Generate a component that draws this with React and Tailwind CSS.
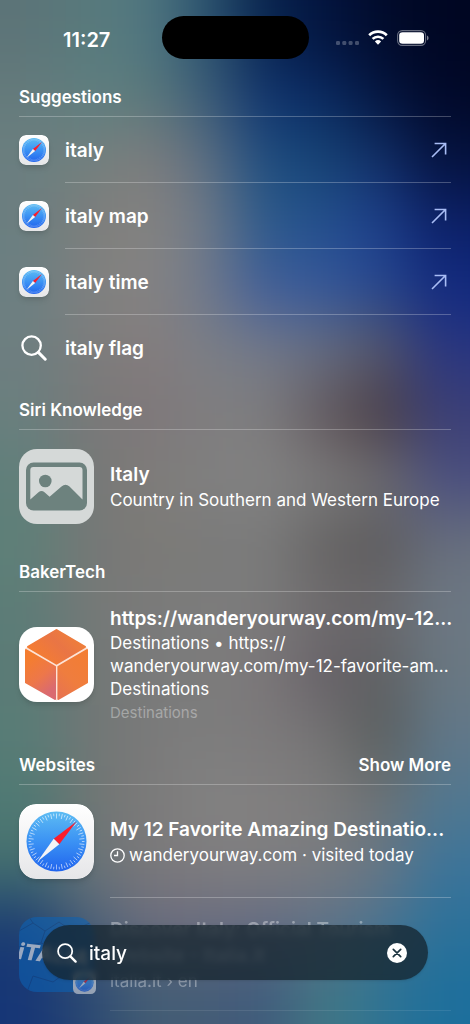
import React, { useState } from 'react';

const font = 'font-[Inter,"Liberation_Sans",sans-serif]';

// Wallpaper colours, top to bottom, left to right
const wallpaper = [
  ['#5c7478', '#587a7c', '#527880', '#2c5470', '#08244f', '#03143f', '#010b2b', '#000622'],
  ['#657b7c', '#5f7f80', '#5b7a7c', '#3c5d78', '#10336e', '#0a2a62', '#04153f', '#010828'],
  ['#6b7f80', '#72807f', '#807d7d', '#5e7082', '#1e4d80', '#164474', '#122f68', '#04123e'],
  ['#6b7e80', '#7d7d7b', '#858380', '#707a88', '#2c5a8a', '#24508f', '#1d3f8a', '#0c2068'],
  ['#6c8082', '#7f8080', '#868482', '#70798c', '#405d9a', '#35579a', '#26478f', '#122a80'],
  ['#6e7e80', '#7b7c7c', '#857c7c', '#7c7f85', '#757a88', '#686e80', '#575668', '#2a3680'],
  ['#6a7f7e', '#797878', '#7e777a', '#7f7d7e', '#7e7d7e', '#62585d', '#483c42', '#3c3f76'],
  ['#5f7f7a', '#767877', '#7f7c79', '#808080', '#828282', '#7c7c7d', '#706f72', '#4a4f80'],
  ['#5e8078', '#757776', '#7c7a76', '#7a7a79', '#7b7b7b', '#646262', '#5b595a', '#69707e'],
  ['#5c7c77', '#767877', '#7a7a7a', '#7c7c7c', '#7b7b7b', '#706d6f', '#6a686b', '#6c7884'],
  ['#5a7b76', '#727775', '#7a7a7a', '#7c7c7c', '#7c7779', '#655f66', '#5f6062', '#6a7882'],
  ['#587c76', '#717675', '#7a7a7a', '#7d7d7d', '#7c7a7b', '#757475', '#585c5b', '#61788a'],
  ['#4f7a74', '#6f7574', '#7c7a7a', '#828282', '#828080', '#7d7c7c', '#6c7174', '#517890'],
  ['#44706f', '#6a7377', '#7b797a', '#7f7d7e', '#7f7f80', '#7a7c7f', '#687684', '#3c749a'],
  ['#1a3b72', '#4a6178', '#6a6b7d', '#6a6c80', '#656b82', '#5e7088', '#4b7390', '#2b719a'],
  ['#163676', '#2a4872', '#435d74', '#445c76', '#3f5a7c', '#427884', '#2e7393', '#1d6f9c'],
];

const Wallpaper = () => (
  <svg
    className="absolute inset-0 w-full h-full"
    viewBox="0 0 8 16"
    preserveAspectRatio="none"
    aria-hidden="true"
  >
    <filter id="soften" x="-20%" y="-20%" width="140%" height="140%" colorInterpolationFilters="sRGB">
      <feGaussianBlur stdDeviation="0.5 0.5" />
    </filter>
    <g filter="url(#soften)">
      {wallpaper.map((row, y) =>
        row.map((color, x) => {
          const left = x === 0 ? -3 : x;
          const right = x === 7 ? 11 : x + 1.02;
          const top = y === 0 ? -3 : y;
          const bottom = y === 15 ? 19 : y + 1.02;
          return (
            <rect key={`${x}-${y}`} x={left} y={top} width={right - left} height={bottom - top} fill={color} />
          );
        })
      )}
    </g>
  </svg>
);

const ticks = Array.from({ length: 60 }, (_, i) => i * 6);

const SafariIcon = ({ className }) => (
  <svg className={className} viewBox="0 0 75 75" aria-hidden="true">
    <defs>
      <linearGradient id="safari-tile" x1="0" y1="0" x2="0" y2="1">
        <stop offset="0" stopColor="#ffffff" />
        <stop offset="1" stopColor="#e6e6e8" />
      </linearGradient>
      <linearGradient id="safari-dial" x1="0" y1="0" x2="0" y2="1">
        <stop offset="0" stopColor="#5dbcf3" />
        <stop offset="0.5" stopColor="#3b92f4" />
        <stop offset="1" stopColor="#2064ee" />
      </linearGradient>
    </defs>
    <rect width="75" height="75" rx="17" fill="url(#safari-tile)" />
    <circle cx="37.5" cy="37.5" r="30" fill="url(#safari-dial)" />
    {ticks.map((angle, i) => (
      <path
        key={angle}
        d={i % 2 ? 'M37.5 9.5v2.6' : 'M37.5 9.5v5'}
        stroke="#fff"
        strokeOpacity="0.7"
        strokeWidth="0.8"
        transform={`rotate(${angle} 37.5 37.5)`}
      />
    ))}
    <path d="M57.5 17.5 34.7 34.7 40.3 40.3z" fill="#fb1d2c" />
    <path d="M18.5 57.5 34.7 34.7 40.3 40.3z" fill="#f4f4f6" />
  </svg>
);

const SearchIcon = ({ className }) => (
  <svg className={className} viewBox="0 0 26 26" fill="none" stroke="currentColor" aria-hidden="true">
    <circle cx="10.6" cy="10.6" r="9.2" strokeWidth="2.3" />
    <path d="M17.4 17.4l6.8 6.8" strokeWidth="3" strokeLinecap="round" />
  </svg>
);

const ArrowIcon = () => (
  <svg className="w-4 h-4 mr-1 text-[#a9bdf5]" viewBox="0 0 16 16" fill="none" stroke="currentColor" strokeWidth="1.6" aria-hidden="true">
    <path d="M1 15 14.5 1.5M3.6 1.5h11v11" />
  </svg>
);

const PhotoIcon = () => (
  <svg className="w-[75px] h-[75px] shrink-0" viewBox="0 0 75 75" aria-hidden="true">
    <rect width="75" height="75" rx="18" fill="#d5d9d8" />
    <rect x="7" y="13.5" width="61" height="48" rx="7.5" fill="#6d827e" />
    <path
      d="M11.3 21q0-3 3-3h46.2q3 0 3 3v29.5L50.5 37.6q-4-3.6-8 0L30.6 47.8 25.5 43.3q-3-2.5-6 0L11.3 50.5z"
      fill="#d5d9d8"
    />
    <circle cx="26.3" cy="32" r="6.3" fill="#6d827e" />
  </svg>
);

const CubeIcon = () => (
  <svg className="w-[75px] h-[75px] shrink-0 rounded-[18px] shadow-md" viewBox="0 0 75 75" aria-hidden="true">
    <defs>
      <linearGradient id="cube-top" x1="0.2" y1="0.8" x2="0.9" y2="0.4">
        <stop offset="0" stopColor="#f47c33" />
        <stop offset="0.6" stopColor="#e97545" />
        <stop offset="1" stopColor="#ee7d3c" />
      </linearGradient>
      <linearGradient id="cube-left" x1="0.3" y1="0.1" x2="0.7" y2="0.9">
        <stop offset="0" stopColor="#f47d30" />
        <stop offset="0.55" stopColor="#ed774a" />
        <stop offset="1" stopColor="#da6a70" />
      </linearGradient>
      <linearGradient id="cube-right" x1="0.8" y1="0" x2="0.2" y2="1">
        <stop offset="0" stopColor="#f37d33" />
        <stop offset="0.6" stopColor="#ef7d3e" />
        <stop offset="1" stopColor="#e8744f" />
      </linearGradient>
    </defs>
    <rect width="75" height="75" fill="#fff" />
    <path d="M6 21.5 37.5 2 69 21.5V55L37.5 73.5 6 55z" fill="#fde3d6" />
    <g strokeWidth="2" strokeLinejoin="round">
      <path d="M37.5 3 66 19.8 37.5 36.7 9 19.8z" fill="url(#cube-top)" stroke="url(#cube-top)" />
      <path d="M7 23 36 39.8V72L7 55.5z" fill="url(#cube-left)" stroke="url(#cube-left)" />
      <path d="M68 23 39.4 39.8V72L68 55.5z" fill="url(#cube-right)" stroke="url(#cube-right)" />
    </g>
  </svg>
);

const ItaliaIcon = () => (
  <div className="relative shrink-0 opacity-55">
    <svg className="w-[75px] h-[75px] rounded-[18px]" viewBox="0 0 75 75" aria-hidden="true">
      <rect width="75" height="75" fill="#0a63b8" />
      <path
        d="M0 14 14 6l12 8 14-9 13 9 22-10M14 6 10 0M26 14l-4 12 16 6 15-18M0 30l22-4M53 14l8 16 14-4M8 75l6-16 20 6 14-10 27 8"
        fill="none"
        stroke="#0b4a93"
        strokeWidth="1"
      />
      <text
        x="-2"
        y="42"
        fill="#fff"
        fontFamily="Inter, sans-serif"
        fontSize="22"
        fontWeight="800"
        fontStyle="italic"
        transform="rotate(6 0 42)"
      >
        iTALIA
      </text>
    </svg>
    <SafariIcon className="absolute -right-0.5 -bottom-0.5 w-[23px] h-[23px]" />
  </div>
);

const StatusBar = () => (
  <header className="grid grid-cols-[1fr_147px_1fr] items-center h-[79px] pb-1">
    <div className="pt-1 pl-3 text-center text-[20px] font-semibold">11:27</div>
    <div className="h-[43px] rounded-full bg-black" />
    <div className="flex justify-end items-center gap-[9px] pr-[41px]">
      <svg className="w-[23px] h-4" viewBox="0 0 23 16" fill="#fff" fillOpacity="0.25" aria-hidden="true">
        <rect x="0" y="11" width="4" height="4" rx="1.3" />
        <rect x="6.3" y="11" width="4" height="4" rx="1.3" />
        <rect x="12.6" y="11" width="4" height="4" rx="1.3" />
        <rect x="19" y="11" width="4" height="4" rx="1.3" />
      </svg>
      <svg className="w-5 h-[15px]" viewBox="0 0 20 15" fill="none" stroke="#fff" strokeWidth="2.7" aria-hidden="true">
        <path d="M1.2 5.3a12.6 12.6 0 0 1 17.6 0" />
        <path d="M4.6 8.9a7.8 7.8 0 0 1 10.8 0" />
        <path d="M10 14.7 6.9 11.5a4.5 4.5 0 0 1 6.2 0z" fill="#fff" stroke="none" />
      </svg>
      <svg className="w-8 h-4" viewBox="0 0 32 16" aria-hidden="true">
        <rect x="0.6" y="0.6" width="28" height="14.8" rx="4.6" fill="none" stroke="#fff" strokeOpacity="0.4" strokeWidth="1.1" />
        <rect x="2.2" y="2.2" width="24.8" height="11.6" rx="3.3" fill="#fff" />
        <path d="M30 5.6v4.8q1.6-.8 1.6-2.4T30 5.6z" fill="#fff" fillOpacity="0.5" />
      </svg>
    </div>
  </header>
);

const Section = ({ title, action, children }) => (
  <section className="mb-[11px]">
    <div className="flex justify-between items-center h-[38px] border-b border-white/25 text-[17px] font-semibold">
      <h2>{title}</h2>
      {action && <button type="button">{action}</button>}
    </div>
    {children}
  </section>
);

const Suggestion = ({ label, search }) => (
  <a href={`#${label.replace(' ', '-')}`} className="flex items-center gap-4 h-[66px]">
    {search ? (
      <span className="flex justify-center w-[30px] shrink-0">
        <SearchIcon className="w-[26px] h-[26px]" />
      </span>
    ) : (
      <SafariIcon className="w-[30px] h-[30px] shrink-0 rounded-[7px] shadow-md" />
    )}
    <span
      className={`flex flex-1 items-center justify-between h-full border-b text-[19px] font-semibold ${
        search ? 'border-transparent' : 'border-white/25'
      }`}
    >
      <span className="pt-1">{label}</span>
      {!search && <ArrowIcon />}
    </span>
  </a>
);

const suggestions = ['italy', 'italy map', 'italy time'];

export default function App() {
  const [query, setQuery] = useState('italy');

  return (
    <div className={`relative h-screen overflow-hidden bg-[#1a3b72] text-white ${font}`}>
      <Wallpaper />
      <div className="relative">
        <StatusBar />
        <main className="px-[19px]">
          <Section title="Suggestions">
            {suggestions.map(label => (
              <Suggestion key={label} label={label} />
            ))}
            <Suggestion label="italy flag" search />
          </Section>

          <Section title="Siri Knowledge">
            <a href="#italy" className="flex items-center gap-4 h-[113px]">
              <PhotoIcon />
              <div className="min-w-0 flex-1">
                <div className="text-[19px] leading-[26px] font-semibold">Italy</div>
                <div className="text-[17px] leading-[24px]">Country in Southern and Western Europe</div>
              </div>
            </a>
          </Section>

          <Section title="BakerTech">
            <a href="#bakertech" className="flex items-center gap-4 h-[144px]">
              <CubeIcon />
              <div className="min-w-0 flex-1 pt-0.5 whitespace-nowrap">
                <div className="text-[19px] leading-[26px] font-semibold">https://wanderyourway.com/my-12...</div>
                <div className="text-[17px] leading-[23px]">
                  <div>Destinations • https://</div>
                  <div>wanderyourway.com/my-12-favorite-am...</div>
                  <div>Destinations</div>
                </div>
                <div className="text-[15px] leading-[23px] text-white/35">Destinations</div>
              </div>
            </a>
          </Section>

          <Section title="Websites" action="Show More">
            <a href="#favorites" className="flex items-center gap-4 h-[113px]">
              <SafariIcon className="w-[75px] h-[75px] shrink-0 rounded-[17px] shadow-md" />
              <div className="flex flex-col justify-center min-w-0 flex-1 h-full pt-0.5 border-b border-white/25 whitespace-nowrap">
                <div className="text-[19px] leading-[26px] font-semibold">My 12 Favorite Amazing Destinatio...</div>
                <div className="flex items-center gap-1 text-[17px] leading-[24px]">
                  <svg className="w-[15px] h-[15px]" viewBox="0 0 15 15" fill="none" stroke="#fff" strokeWidth="1.3" aria-hidden="true">
                    <circle cx="7.5" cy="7.5" r="6.7" />
                    <path d="M7.5 3.3v4.2H4" />
                  </svg>
                  <span>wanderyourway.com · visited today</span>
                </div>
              </div>
            </a>
            <a href="#italia" className="flex items-center gap-4 h-[113px]">
              <ItaliaIcon />
              <div className="flex flex-col justify-center min-w-0 flex-1 h-full pt-0.5 border-b border-white/25 opacity-35">
                <div className="text-[19px] leading-[26px] font-semibold">
                  Discover Italy: Official Tourism
                  <br />
                  Website - Italia.it
                </div>
                <div className="text-[17px] leading-[24px]">italia.it › en</div>
              </div>
            </a>
          </Section>
        </main>
      </div>

      <form
        className="absolute inset-x-[42px] bottom-[44px] flex items-center gap-3 h-[55px] pl-[15px] pr-[21px] rounded-full bg-[#14232c]/75 backdrop-blur-[3px] shadow-sm"
        onSubmit={e => e.preventDefault()}
      >
        <SearchIcon className="w-5 h-5 shrink-0" />
        <input
          type="text"
          aria-label="Search"
          value={query}
          onChange={e => setQuery(e.target.value)}
          className="min-w-0 flex-1 pt-1 bg-transparent text-[19px] font-medium outline-none"
        />
        <button type="button" aria-label="Clear search" onClick={() => setQuery('')} className="shrink-0">
          <svg className="w-5 h-5" viewBox="0 0 20 20" aria-hidden="true">
            <circle cx="10" cy="10" r="10" fill="#fff" />
            <path d="M6.3 6.3l7.4 7.4M13.7 6.3l-7.4 7.4" stroke="#1c3440" strokeWidth="1.7" strokeLinecap="round" />
          </svg>
        </button>
      </form>
    </div>
  );
}
